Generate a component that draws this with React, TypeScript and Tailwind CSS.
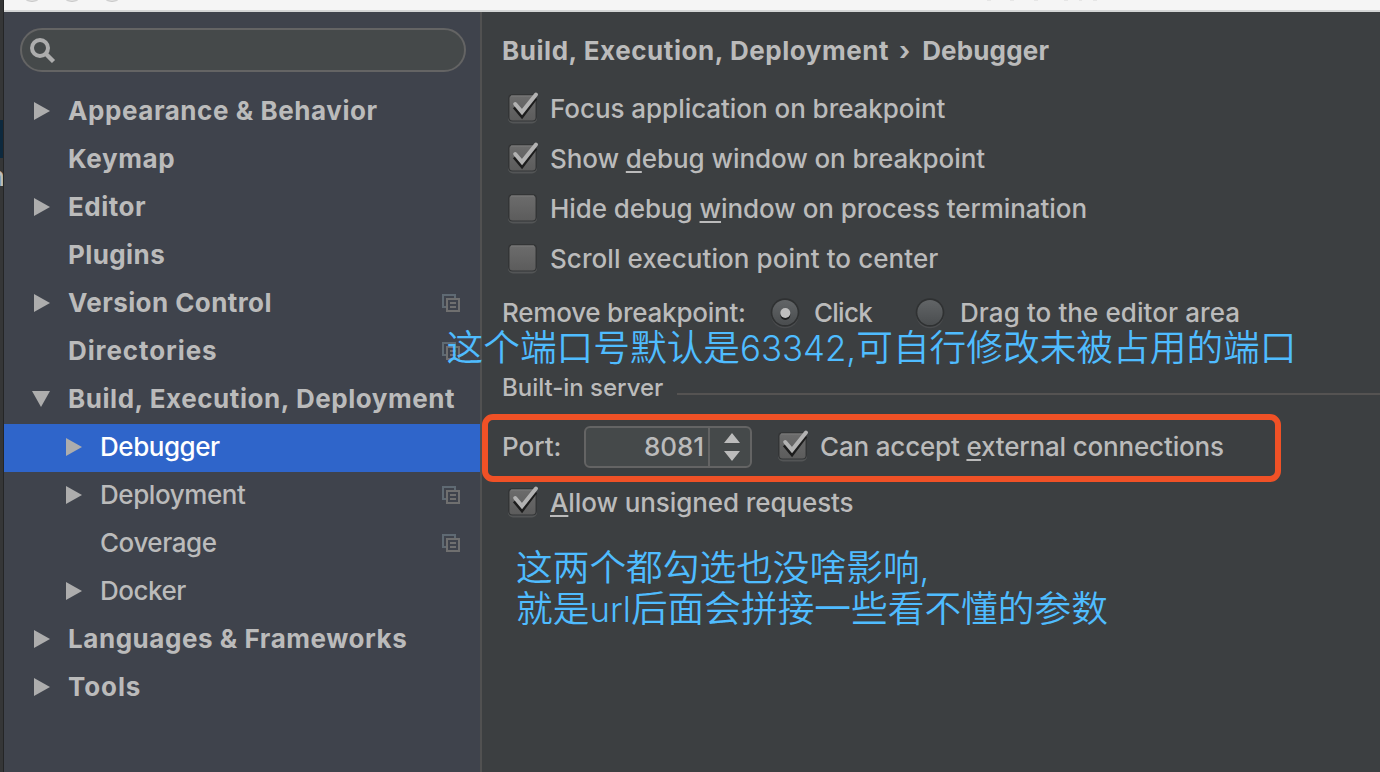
import type { ReactNode } from "react";

function Arrow({ open = false }: { open?: boolean }) {
  return (
    <svg className="h-[18px] w-[18px] shrink-0" viewBox="0 0 18 18" fill="#adadad">
      {open ? <path d="M0 1h18L9 17z" /> : <path d="M2 0l16 9L2 18z" />}
    </svg>
  );
}

function CopyIcon() {
  return (
    <svg className="h-[18px] w-[18px] shrink-0" viewBox="0 0 18 18" fill="none" strokeWidth="2">
      <path d="M13 4V1H1v12h3" stroke="#5f6a73" />
      <path d="M5 5h12v12H5z" stroke="#6f6f6f" />
      <path d="M8 9h6M8 13h6" stroke="#6f6f6f" />
    </svg>
  );
}

function CheckBox({ checked = false }: { checked?: boolean }) {
  return (
    <svg className="h-9 w-[34px] shrink-0" viewBox="0 1 34 36" fill="none">
      <defs>
        <linearGradient id="boxFill" x1="0" y1="0" x2="0" y2="1">
          <stop offset="0" stopColor="#6c6c6c" />
          <stop offset="1" stopColor="#5c5c5c" />
        </linearGradient>
      </defs>
      <rect x="2" y="6.5" width="29" height="27" rx="5" fill="#535556" />
      <rect x="2" y="4" width="29" height="27.5" rx="4.5" fill="#333536" />
      <rect x="3.5" y="5.5" width="26" height="25" rx="3" fill="url(#boxFill)" />
      <path d="M5 6h23" stroke="#7a7a7a" />
      {checked && (
        <>
          <path d="M8.5 17l7.5 9L29.5 8" stroke="#1c1c1c" strokeWidth="4" />
          <path d="M9.2 14l6.8 8L30 4.5" stroke="#b2b2b2" strokeWidth="4" strokeLinecap="round" />
        </>
      )}
    </svg>
  );
}

function Radio({ checked = false }: { checked?: boolean }) {
  return (
    <svg className="h-8 w-8 shrink-0" viewBox="0 0 32 32">
      <defs>
        <linearGradient id="radioFill" x1="0" y1="0" x2="0" y2="1">
          <stop offset="0" stopColor="#626567" />
          <stop offset="1" stopColor="#4a4d4f" />
        </linearGradient>
      </defs>
      <circle cx="16" cy="17.3" r="14" fill="#4b4d4f" />
      <circle cx="16" cy="15.5" r="14.3" fill="#2f3132" />
      <circle cx="16" cy="15.5" r="12.6" fill="url(#radioFill)" />
      {checked && (
        <>
          <circle cx="16.3" cy="18" r="5" fill="#1d1e1f" />
          <circle cx="16.3" cy="16" r="5" fill="#bfbfbf" />
        </>
      )}
    </svg>
  );
}

type Item = {
  label: string;
  track: string;
  arrow?: "open" | "closed";
  nested?: boolean;
  copy?: boolean;
  selected?: boolean;
};

const items: Item[] = [
  { label: "Appearance & Behavior", track: "tracking-[0.57px]", arrow: "closed" },
  { label: "Keymap", track: "tracking-[0.6px]" },
  { label: "Editor", track: "tracking-[0.5px]", arrow: "closed" },
  { label: "Plugins", track: "tracking-[0.4px]" },
  { label: "Version Control", track: "tracking-[0.42px]", arrow: "closed", copy: true },
  { label: "Directories", track: "tracking-[0.9px]", copy: true },
  { label: "Build, Execution, Deployment", track: "tracking-[0.55px]", arrow: "open" },
  { label: "Debugger", track: "tracking-[-0.45px]", arrow: "closed", nested: true, selected: true },
  { label: "Deployment", track: "tracking-[-0.42px]", arrow: "closed", nested: true, copy: true },
  { label: "Coverage", track: "tracking-[-0.45px]", nested: true, copy: true },
  { label: "Docker", track: "tracking-[-0.5px]", arrow: "closed", nested: true },
  { label: "Languages & Frameworks", track: "tracking-[0.55px]", arrow: "closed" },
  { label: "Tools", track: "tracking-[0.9px]", arrow: "closed" },
];

function SidebarRow({ item }: { item: Item }) {
  return (
    <div
      className={`flex h-12 items-center pr-5 pb-0.5 ${item.nested ? "pl-[60px]" : "pl-7"} ${
        item.selected ? "bg-[#2f65ca] text-white" : ""
      }`}
    >
      <div className="flex w-9 shrink-0">{item.arrow && <Arrow open={item.arrow === "open"} />}</div>
      <span className={`grow ${item.nested ? "" : "font-bold"} ${item.track}`}>{item.label}</span>
      {item.copy && <CopyIcon />}
    </div>
  );
}

function Key({ children }: { children: ReactNode }) {
  return (
    <span className="underline decoration-2 underline-offset-[3px] [text-decoration-skip-ink:none]">{children}</span>
  );
}

function Check({ checked, track, children }: { checked?: boolean; track: string; children: ReactNode }) {
  return (
    <label className="flex items-center gap-2.5">
      <CheckBox checked={checked} />
      <span className={track}>{children}</span>
    </label>
  );
}

function Latin({ children }: { children: ReactNode }) {
  return <span className="font-['Inter'] text-[34.8px] leading-none">{children}</span>;
}

export default function App() {
  return (
    <div className="relative flex h-[772px] w-[1380px] overflow-hidden whitespace-nowrap bg-[#3c3f41] font-['Inter','Liberation_Sans',sans-serif] text-[26px] leading-8 font-[450] text-[#bbbbbb]">
      <div className="flex w-1 shrink-0 flex-col overflow-hidden border-r border-[#242526] bg-[#353637]">
        <div className="mt-[120px] h-[38px] bg-[#0d293e]" />
        <div className="mt-[7px] -mr-0.5 flex h-6 justify-end text-[26px] leading-6">
          <span>n</span>
        </div>
      </div>

      <div className="flex grow flex-col">
        <div className="flex h-3 shrink-0 overflow-hidden border-b-2 border-[#d3d5d5] bg-[#f5f5f5]">
          <svg className="h-[10px] w-full" viewBox="0 0 1376 10" fill="none">
            <g fill="#e2e2e2" stroke="#c6c6c6">
              <circle cx="28" cy="-10" r="11.5" />
              <circle cx="68" cy="-10" r="11.5" />
              <circle cx="108" cy="-10" r="11.5" />
            </g>
            <path d="M983 .5h4M1006 .5h4M1030 .5h4M1060 .5h4M1075 .5h3M1089 .5h4" stroke="#e6e6e6" />
          </svg>
        </div>

        <div className="flex grow">
          <aside className="flex w-[478px] shrink-0 flex-col border-r-2 border-[#515151] bg-[#3f434c]">
            <div className="mt-4 mb-4 ml-4 flex h-11 w-[446px] shrink-0 items-center rounded-full border-2 border-[#646464] bg-[#45494a] pl-2">
              <svg className="h-[26px] w-[26px]" viewBox="0 0 26 26" fill="none" stroke="#adadad" strokeWidth="4">
                <circle cx="10" cy="11" r="8" />
                <path d="M15.5 16.5l8 8" strokeWidth="4.4" />
              </svg>
            </div>
            {items.map((item) => (
              <SidebarRow key={item.label} item={item} />
            ))}
          </aside>

          <main className="flex grow flex-col">
            <div className="mt-[23px] ml-5 flex h-8 items-center font-bold">
              <span className="tracking-[0.55px]">Build, Execution, Deployment</span>
              <span className="w-[33px] pr-0.5 text-center">›</span>
              <span className="tracking-[0.15px]">Debugger</span>
            </div>

            <div className="mt-[17px] ml-6 flex flex-col">
              <div className="flex h-[50px] items-center">
                <Check checked track="tracking-[-0.05px]">Focus application on breakpoint</Check>
              </div>
              <div className="flex h-[50px] items-center">
                <Check checked track="tracking-[-0.08px]">Show <Key>d</Key>ebug window on breakpoint</Check>
              </div>
              <div className="flex h-[50px] items-center">
                <Check track="tracking-[-0.07px]">Hide debug <Key>w</Key>indow on process termination</Check>
              </div>
              <div className="flex h-[50px] items-center">
                <Check track="tracking-[0.07px]">Scroll execution point to center</Check>
              </div>
            </div>

            <div className="mt-[13px] ml-5 flex h-8 items-center">
              <span className="w-[267px] tracking-[-0.23px]">Remove breakpoint:</span>
              <Radio checked />
              <span className="ml-[13px] w-[100px] tracking-[-0.75px]">Click</span>
              <Radio />
              <span className="ml-[14px] tracking-[0.08px]">Drag to the editor area</span>
            </div>

            <div className="mt-[43px] ml-5 flex h-8 items-center text-[24px]">
              <span className="w-[175px] tracking-[-0.03px]">Built-in server</span>
              <div className="mt-3 h-0.5 grow bg-[#555352]" />
            </div>

            <div className="mt-[10px] flex h-[68px] w-[799px] items-center rounded-[11px] border-[6px] border-[#f05126] pb-0.5 pl-[14px]">
              <span className="w-[82px]">Port:</span>
              <div className="mr-6 flex h-[42px] w-[168px] overflow-hidden rounded-md border-2 border-[#646464] bg-[#45494a]">
                <span className="flex grow items-center justify-end border-r-2 border-[#646464] pr-1 tracking-[-0.1px]">8081</span>
                <div className="flex w-10 items-center justify-center pl-1">
                  <svg className="h-7 w-4" viewBox="0 0 16 28" fill="#bbbbbb">
                    <path d="M0 10L8 0l8 10zM0 18h16l-8 10z" />
                  </svg>
                </div>
              </div>
              <Check checked track="tracking-[-0.17px]">Can accept <Key>e</Key>xternal connections</Check>
            </div>

            <div className="mt-[3px] ml-6 flex h-9 items-center">
              <Check checked track="tracking-[-0.09px]"><Key>A</Key>llow unsigned requests</Check>
            </div>
          </main>
        </div>
      </div>

      <div className="absolute top-[325px] left-[446.5px] h-[41px] font-['Noto_Sans_CJK_SC',sans-serif] text-[36.7px] leading-[41px] font-[350] text-[#4fbcff]">
        这个端口号默认是<Latin>63342,</Latin>可自行修改未被占用的端口
      </div>
      <div className="absolute top-[545px] left-[516px] font-['Noto_Sans_CJK_SC',sans-serif] text-[36.7px] leading-[41px] font-[350] text-[#4fbcff]">
        <div className="h-[41px]">这两个都勾选也没啥影响<Latin>,</Latin></div>
        <div className="h-[41px]">就是<Latin>url</Latin>后面会拼接一些看不懂的参数</div>
      </div>
    </div>
  );
}
